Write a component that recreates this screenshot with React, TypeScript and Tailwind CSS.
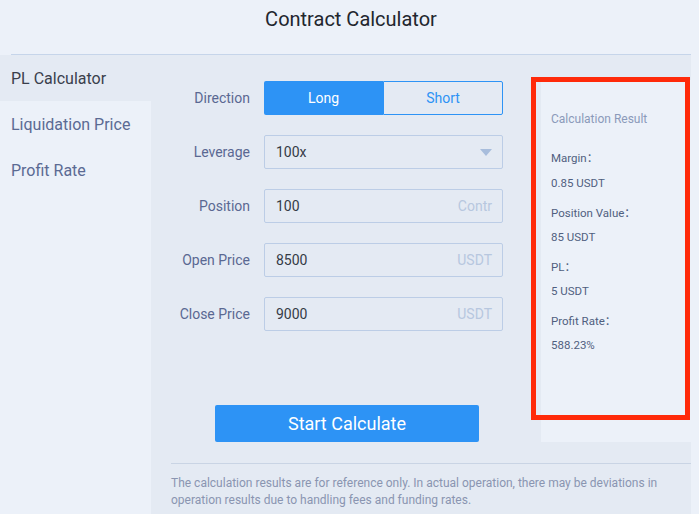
import React from "react";

const font = { fontFamily: 'Roboto, "Noto Sans CJK SC", sans-serif' };

function Row({ label, children }: { label: string; children: React.ReactNode }) {
  return (
    <div className="flex h-[34px] items-center">
      <div className="w-[99px] text-right text-[14px] text-[#5a6892]">{label}</div>
      <div className="ml-[14px] h-[34px] w-[239px]">{children}</div>
    </div>
  );
}

function Field({ value, suffix }: { value: string; suffix: string }) {
  return (
    <div className="flex h-full items-center justify-between rounded-[2px] border border-[#bccde6] pl-[11px] pr-[10px] text-[14px]">
      <span className="text-[#353b46]">{value}</span>
      <span className="text-[#b7c7df]">{suffix}</span>
    </div>
  );
}

export default function App() {
  return (
    <div style={font} className="relative h-[514px] w-[699px] overflow-hidden bg-[#ecf1f9]">
      <div className="ml-[11px] mr-[8px] flex h-[55px] justify-center border-b border-[#c6d5ea] pt-[5px]">
        <span className="text-[20px] leading-[28px] text-[#22262e]">Contract Calculator</span>
      </div>
      <div className="flex h-[459px]">
        <div className="w-[151px]">
          <div className="flex h-[46px] items-center bg-[#e4eaf3] pl-[11px] pt-[1px] text-[16px] text-[#3a3f4c]">PL Calculator</div>
          <div className="flex h-[46px] items-center pl-[11px] pt-[1px] text-[16px] text-[#5b6a93]">Liquidation Price</div>
          <div className="flex h-[46px] items-center pl-[11px] pt-[1px] text-[16px] text-[#5b6a93]">Profit Rate</div>
        </div>
        <div className="flex w-[540px] flex-col bg-[#e4eaf3]">
          <div className="flex pt-[25px]">
            <div className="flex w-[390px] flex-col pt-[1px]">
              <div className="flex flex-col gap-[20px]">
                <Row label="Direction">
                  <div className="flex h-full text-[14px]">
                    <div className="flex w-[119px] items-center justify-center rounded-l-[2px] bg-[#2d93f5] text-white">Long</div>
                    <div className="flex flex-1 items-center justify-center rounded-r-[2px] border border-[#2d93f5] text-[#2d93f5]">Short</div>
                  </div>
                </Row>
                <Row label="Leverage">
                  <div className="flex h-full items-center justify-between rounded-[2px] border border-[#bccde6] pl-[11px] pr-[10px] text-[14px]">
                    <span className="text-[#353b46]">100x</span>
                    <svg width="12" height="7" viewBox="0 0 12 7">
                      <path d="M0 0 H12 L6 7 Z" fill="#a8bddc" />
                    </svg>
                  </div>
                </Row>
                <Row label="Position">
                  <Field value="100" suffix="Contr" />
                </Row>
                <Row label="Open Price">
                  <Field value="8500" suffix="USDT" />
                </Row>
                <Row label="Close Price">
                  <Field value="9000" suffix="USDT" />
                </Row>
              </div>
              <div className="mt-[74px] flex pl-[64px]">
                <div className="flex h-[37px] w-[264px] items-center justify-center rounded-[2px] bg-[#2d93f5] text-[18px] text-white">
                  Start Calculate
                </div>
              </div>
            </div>
            <div className="flex h-[362px] w-[150px] flex-col bg-[#ecf1f9] pl-[10px] pt-[31px] text-[11.5px] leading-[16px] text-[#505f80]">
              <div className="text-[12px] text-[#8b9aba]">Calculation Result</div>
              <div className="mt-[23px]">Margin：</div>
              <div className="mt-[9px]">0.85 USDT</div>
              <div className="mt-[14px]">Position Value：</div>
              <div className="mt-[8px]">85 USDT</div>
              <div className="mt-[14px]">PL：</div>
              <div className="mt-[8px]">5 USDT</div>
              <div className="mt-[14px]">Profit Rate：</div>
              <div className="mt-[8px]">588.23%</div>
            </div>
          </div>
          <div className="ml-[20px] mt-[21px] border-t border-[#c9d4e4] pt-[11px] text-[12px] leading-[17px] text-[#8a95b1]">
            The calculation results are for reference only. In actual operation, there may be deviations in
            <br />
            operation results due to handling fees and funding rates.
          </div>
        </div>
      </div>
      <div className="absolute left-[531px] top-[77px] h-[343px] w-[159px] border-[5px] border-[#ff2a0a]" />
    </div>
  );
}
